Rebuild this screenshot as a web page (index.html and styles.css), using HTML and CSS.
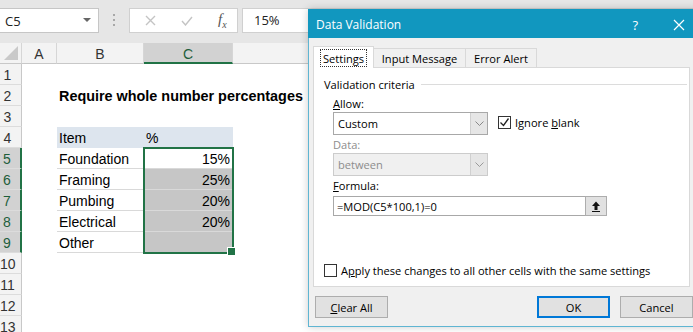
FILE: index.html
```html
<!DOCTYPE html>
<html lang="en">
<head>
    <meta charset="UTF-8">
    <title>Data Validation</title>
    <link rel="stylesheet" href="styles.css">
</head>
<body>
<div class="app">
    <div class="fbar">
        <div class="namebox">
            <span>C5</span>
            <svg width="8" height="5" viewBox="0 0 8 5"><path d="M0 0h8L4 4z" fill="#666"/></svg>
        </div>
        <div class="dots"><i></i><i></i><i></i></div>
        <div class="fbtns">
            <svg width="11" height="11" viewBox="0 0 11 11"><path d="M1 1l9 9M10 1l-9 9" stroke="#c4c4c4" stroke-width="1.4"/></svg>
            <svg width="12" height="10" viewBox="0 0 12 10"><path d="M1 5l3.5 4L11 1" stroke="#c4c4c4" stroke-width="1.4" fill="none"/></svg>
            <span class="fx"><i>f</i><sub>x</sub></span>
        </div>
        <div class="finput">15%</div>
    </div>

    <div class="sheet">
        <div class="ch corner"><svg width="14" height="14" viewBox="0 0 14 14"><path d="M14 0v14H0z" fill="#c9c9c9"/></svg></div>
        <div class="ch">A</div>
        <div class="ch">B</div>
        <div class="ch on">C</div>
        <div class="ch">D</div>

        <div class="rh">1</div><div></div><div></div><div></div><div></div>
        <div class="rh">2</div><div></div><div class="title">Require whole number percentages</div><div></div><div></div>
        <div class="rh">3</div><div></div><div></div><div></div><div></div>
        <div class="rh">4</div><div></div><div class="tb hd">Item</div><div class="tb hd">%</div><div></div>
        <div class="rh on">5</div><div></div><div class="tb">Foundation</div>
        <div class="tb num first">15%<div class="sel"></div></div><div></div>
        <div class="rh on">6</div><div></div><div class="tb">Framing</div><div class="tb num gray">25%</div><div></div>
        <div class="rh on">7</div><div></div><div class="tb">Pumbing</div><div class="tb num gray">20%</div><div></div>
        <div class="rh on">8</div><div></div><div class="tb">Electrical</div><div class="tb num gray">20%</div><div></div>
        <div class="rh on">9</div><div></div><div class="tb">Other</div><div class="tb num gray"></div><div></div>
        <div class="rh">10</div><div></div><div></div><div></div><div></div>
        <div class="rh">11</div><div></div><div></div><div></div><div></div>
        <div class="rh">12</div><div></div><div></div><div></div><div></div>
        <div class="rh">13</div><div></div><div></div><div></div><div></div>
    </div>

    <div class="dlg">
        <div class="dtitle">
            <span>Data Validation</span>
            <span class="help">?</span>
            <svg class="close" width="12" height="12" viewBox="0 0 12 12"><path d="M1 1l10 10M11 1L1 11" stroke="#fff" stroke-width="1.2"/></svg>
        </div>
        <div class="dbody">
            <div class="tabs">
                <div class="tab active"><span class="focus">Settings</span></div>
                <div class="tab tab2">Input Message</div>
                <div class="tab tab3">Error Alert</div>
            </div>
            <div class="panel">
                <div class="legend">Validation criteria</div>
                <div class="fields">
                    <div class="lbl"><u>A</u>llow:</div>
                    <div class="allowrow">
                        <div class="combo">
                            <span>Custom</span>
                            <div class="drop"><svg width="9" height="5" viewBox="0 0 9 5"><path d="M0.5 0.5l4 4 4-4" stroke="#888" fill="none"/></svg></div>
                        </div>
                        <div class="chk">
                            <div class="box"><svg width="11" height="11" viewBox="0 0 11 11"><path d="M1.5 5.5l3 3 5-7" stroke="#222" stroke-width="1.3" fill="none"/></svg></div>
                            <span>Ignore <u>b</u>lank</span>
                        </div>
                    </div>
                    <div class="lbl dis">Data:</div>
                    <div class="combo off">
                        <span>between</span>
                        <div class="drop"><svg width="9" height="5" viewBox="0 0 9 5"><path d="M0.5 0.5l4 4 4-4" stroke="#999" fill="none"/></svg></div>
                    </div>
                    <div class="lbl"><u>F</u>ormula:</div>
                    <div class="formrow">
                        <div class="input">=MOD(C5*100,1)=0</div>
                        <div class="refbtn"><svg width="10" height="11" viewBox="0 0 10 11"><path d="M5 0.5L9 5H6.5v4h-3V5H1z" fill="#111"/><path d="M1 10.5h8" stroke="#111"/></svg></div>
                    </div>
                </div>
                <div class="chk apply">
                    <div class="box"></div>
                    <span>A<u>p</u>ply these changes to all other cells with the same settings</span>
                </div>
            </div>
            <div class="btnrow">
                <div class="btn"><u>C</u>lear All</div>
                <div class="btn ok">OK</div>
                <div class="btn cancel">Cancel</div>
            </div>
        </div>
    </div>
</div>
</body>
</html>
```

FILE: styles.css
```css
*{
    box-sizing: border-box;
}

body{
    margin: 0;
    width: 693px;
    height: 332px;
    overflow: hidden;
    font-family: "Liberation Sans", Arial, sans-serif;
}

.app{
    position: relative;
    height: 332px;
    background: #fff;
}

/* formula bar */
.fbar{
    display: flex;
    align-items: flex-start;
    height: 43px;
    padding-top: 8px;
    background: #e6e6e6;
}

.namebox{
    width: 99px;
    height: 25px;
    background: #fff;
    border: 1px solid #c6c6c6;
    border-left: 0;
    display: flex;
    align-items: center;
    justify-content: space-between;
    padding: 0 7px 0 5px;
    font-family: "Open Sans", sans-serif;
    font-size: 13px;
    color: #222;
}

.dots{
    width: 6px;
    margin: 6px 0 0 12px;
    display: flex;
    flex-direction: column;
    gap: 3px;
}

.dots i{
    display: block;
    width: 2px;
    height: 2px;
    background: #a8a8a8;
    margin-left: 2px;
}

.fbtns{
    width: 109px;
    height: 25px;
    margin-left: 12px;
    background: #fff;
    border: 1px solid #d0d0d0;
    display: flex;
    align-items: center;
    padding-left: 15px;
    gap: 25px;
}

.fx{
    font-family: "Liberation Serif", serif;
    font-size: 15px;
    color: #555;
}

.fx sub{
    font-size: 10px;
    font-style: italic;
}

.finput{
    flex: 1;
    height: 25px;
    margin-left: 4px;
    background: #fff;
    border: 1px solid #d0d0d0;
    padding-left: 11px;
    line-height: 23px;
    font-family: "Open Sans", sans-serif;
    font-size: 13px;
    color: #222;
}

/* sheet */
.sheet{
    display: grid;
    grid-template-columns: 22px 35px 87px 89px 1fr;
    grid-auto-rows: 21px;
    font-size: 14px;
}

.ch{
    background: #f3f3f3;
    border-right: 1px solid #d6d6d6;
    border-bottom: 1px solid #c8c8c8;
    text-align: center;
    line-height: 22px;
    color: #333;
}

.ch.on{
    background: #d2d2d2;
    border-bottom: 2px solid #217346;
    color: #1e5e3b;
}

.corner{
    display: flex;
    align-items: flex-end;
    justify-content: flex-end;
    padding: 0 3px 3px 0;
}

.rh{
    background: #f3f3f3;
    border-right: 1px solid #c8c8c8;
    border-bottom: 1px solid #dcdcdc;
    text-align: center;
    padding-right: 6px;
    line-height: 23px;
    color: #333;
}

.rh.on{
    background: #d2d2d2;
    border-right: 2px solid #217346;
    color: #1e5e3b;
}

.title{
    font-weight: bold;
    font-size: 14.4px;
    white-space: nowrap;
    padding-left: 2px;
    line-height: 23px;
    color: #000;
}

.tb{
    border-bottom: 1px solid #d9d9d9;
    padding-left: 2px;
    line-height: 23px;
    color: #000;
}

.tb.hd{
    background: #dde5ee;
    border-bottom: 0;
}

.tb.num{
    text-align: right;
    padding-right: 3px;
    border-left: 1px solid #d9d9d9;
}

.tb.gray{
    background: #c6c6c6;
}

.first{
    position: relative;
}

.sel{
    position: absolute;
    top: -1px;
    left: -2px;
    width: 91px;
    height: 107px;
    border: 2px solid #217346;
}

.sel::after{
    content: "";
    position: absolute;
    right: -4px;
    bottom: -4px;
    width: 7px;
    height: 7px;
    background: #217346;
    border: 1px solid #fff;
}

/* dialog */
.dlg{
    position: absolute;
    left: 308px;
    top: 9px;
    width: 390px;
    height: 318px;
    border: 1px solid #5fb5d2;
    background: #f0f0f0;
    box-shadow: 0 0 8px rgba(0, 0, 0, 0.2);
    font-family: "Open Sans", sans-serif;
    font-size: 11.1px;
    color: #000;
}

.dtitle{
    height: 29px;
    background: #1197bf;
    color: #fff;
    display: flex;
    align-items: center;
    padding: 2px 0 0 8px;
    font-size: 12px;
    margin: -1px -1px 0;
}

.help{
    margin-left: auto;
    font-size: 13px;
}

.close{
    margin: 0 13px 0 35px;
}

.dbody{
    padding: 0 4px;
}

.tabs{
    display: flex;
    align-items: flex-end;
    height: 21px;
    margin-top: 8px;
}

.tab{
    height: 19px;
    border: 1px solid #d9d9d9;
    border-bottom: 0;
    background: #f0f0f0;
    text-align: center;
    line-height: 20px;
}

.tab.active{
    height: 22px;
    width: 61px;
    background: #fff;
    margin-bottom: -1px;
    position: relative;
    padding-top: 2px;
}

.focus{
    display: inline-block;
    border: 1px dotted #333;
    padding: 1px 2px 0;
    line-height: 15px;
}

.tab2{
    width: 92px;
    border-left: 0;
}

.tab3{
    width: 71px;
    border-left: 0;
}

.panel{
    width: 377px;
    height: 220px;
    background: #fff;
    border: 1px solid #d9d9d9;
    padding: 8px 2px 8px 10px;
    display: flex;
    flex-direction: column;
}

.legend{
    display: flex;
    align-items: center;
    gap: 6px;
    height: 16px;
}

.legend::after{
    content: "";
    flex: 1;
    border-top: 1px solid #dcdcdc;
}

.fields{
    margin-left: 9px;
}

.lbl{
    height: 16px;
    line-height: 18px;
    margin-top: 1px;
}

.fields .lbl:first-child{
    margin-top: 3px;
}

.lbl.dis{
    color: #8d8d8d;
}

.allowrow{
    display: flex;
    align-items: flex-start;
    margin-top: 1px;
}

.combo{
    width: 155px;
    height: 23px;
    border: 1px solid #a8a8a8;
    background: #fff;
    display: flex;
    align-items: center;
    padding-left: 4px;
}

.combo span{
    flex: 1;
}

.combo.off{
    margin-top: 1px;
    background: #f0f0f0;
    border-color: #cccccc;
    color: #8d8d8d;
}

.drop{
    width: 17px;
    height: 21px;
    background: #e6e6e6;
    border-left: 1px solid #d0d0d0;
    display: flex;
    align-items: center;
    justify-content: center;
}

.chk{
    display: flex;
    align-items: center;
    gap: 4px;
}

.allowrow .chk{
    margin: 3px 0 0 10px;
}

.box{
    width: 13px;
    height: 13px;
    border: 1px solid #333;
    background: #fff;
    display: flex;
    align-items: center;
    justify-content: center;
}

.formrow{
    display: flex;
    margin-top: 3px;
}

.input{
    width: 252px;
    height: 20px;
    border: 1px solid #a8a8a8;
    border-right: 0;
    background: #fff;
    padding-left: 3px;
    line-height: 19px;
}

.refbtn{
    width: 22px;
    height: 20px;
    border: 1px solid #adadad;
    background: #e1e1e1;
    display: flex;
    align-items: center;
    justify-content: center;
}

.apply{
    margin-top: auto;
    height: 16px;
}

.btnrow{
    display: flex;
    margin-top: 9px;
    padding-left: 2px;
}

.btn{
    width: 73px;
    height: 22px;
    border: 1px solid #adadad;
    background: #e1e1e1;
    text-align: center;
    line-height: 21px;
}

.btn.ok{
    width: 73px;
    margin-left: auto;
    border-color: #0078d7;
    box-shadow: inset 0 0 0 1px #0078d7;
}

.btn.cancel{
    margin-left: 10px;
}
```
